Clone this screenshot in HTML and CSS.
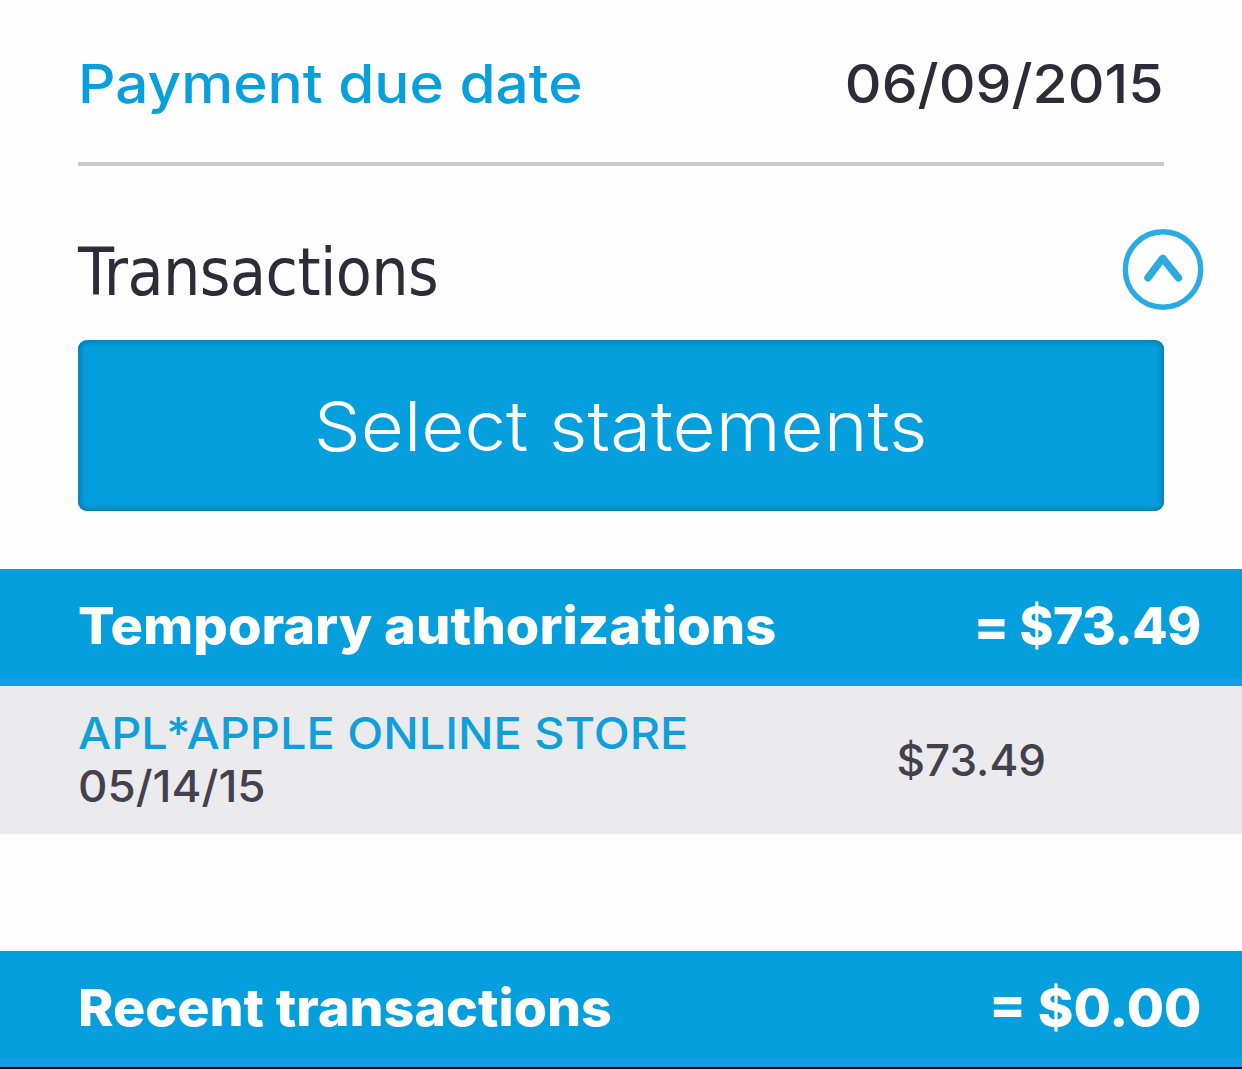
FILE: index.html
```html
<!DOCTYPE html>
<html lang="en">
<head>
<meta charset="utf-8">
<title>Transactions</title>
<link rel="stylesheet" href="styles.css">
</head>
<body>
<main class="page">
  <section class="due">
    <span class="due-label">Payment due date</span>
    <span class="due-date">06/09/2015</span>
  </section>
  <header class="heading">
    <h1 class="title">Transactions</h1>
    <svg class="toggle" viewBox="0 0 82 82" fill="none" stroke="#2cabe2">
      <circle cx="41" cy="40.500" r="37.7" stroke-width="5.4"/>
      <path d="M26 48.800 L40.700 29.300 L56.500 48.800" stroke-width="7.400" stroke-linecap="round" stroke-linejoin="round"/>
    </svg>
  </header>
  <button class="select"><span class="select-text">Select statements</span></button>
  <section class="band">
    <h2 class="band-title temporary-title">Temporary authorizations</h2>
    <span class="band-total temporary-total">= $73.49</span>
  </section>
  <section class="entry">
    <div class="entry-info">
      <span class="merchant">APL*APPLE ONLINE STORE</span>
      <span class="date">05/14/15</span>
    </div>
    <span class="amount">$73.49</span>
  </section>
  <section class="band recent">
    <h2 class="band-title recent-title">Recent transactions</h2>
    <span class="band-total recent-total">= $0.00</span>
  </section>
</main>
</body>
</html>
```
FILE: styles.css
```css
* { box-sizing: border-box; }
body {
  margin: 0;
  background: #fefefe;
  font-family: Inter, "Open Sans", sans-serif;
  font-weight: 500;
  color: #2d2c38;
  white-space: nowrap;
}
h1, h2 { margin: 0; }
.page {
  display: flex;
  flex-direction: column;
  height: 1069px;
  overflow: hidden;
  border-bottom: 2px solid #000;
}
.due {
  display: flex;
  justify-content: space-between;
  height: 166px;
  margin: 0 78px;
  padding-top: 5px;
  border-bottom: 4px solid #cbcbcb;
  font-size: 54px;
  line-height: 158px;
}
/* The wide lettering stretches each label from its aligned edge. */
.due-label { color: #089fdd; transform: scaleX(1.083); transform-origin: left; }
.due-date { transform: scaleX(1.057); transform-origin: right; }
.heading {
  display: flex;
  justify-content: space-between;
  align-items: center;
  height: 174px;
  padding: 33px 38px 0 78px;
}
.title {
  padding-top: 5px;
  font: 400 65.5px/80px "DejaVu Sans Condensed", "DejaVu Sans", sans-serif;
  font-stretch: condensed;
  letter-spacing: -0.55px;
}
.toggle { width: 82px; height: 82px; }
.select {
  height: 171px;
  margin: 0 78px;
  padding: 2px 0 0;
  border: 0;
  border-radius: 9px;
  background: #069fdd;
  box-shadow: inset 0 0 7px 1px #05648ccc;
  color: #fff;
  font: 300 69px/169px Inter, sans-serif;
}
.select-text { display: inline-block; transform: scaleX(1.078); }
.band {
  display: flex;
  justify-content: space-between;
  flex: none;
  height: 117px;
  margin-top: 58px;
  padding: 0 41px 0 78px;
  background: #069fdd;
  border-bottom: 8px solid #149ee5;
  color: #fff;
  font-size: 51.5px;
  font-weight: 800;
  line-height: 113px;
}
.band-title { font: inherit; transform-origin: left; }
.temporary-title { transform: scaleX(1.053); }
.temporary-total { letter-spacing: -0.4px; }
.recent-title { transform: scaleX(1.043); }
.recent-total { transform: scaleX(1.05); transform-origin: right; }
.entry {
  display: flex;
  justify-content: space-between;
  align-items: center;
  height: 148px;
  padding: 0 196px 0 78px;
  background: #ebebed;
  color: #43414e;
  font-size: 44px;
  line-height: 53px;
}
.entry-info { display: flex; flex-direction: column; align-items: flex-start; }
.merchant { color: #119fda; transform: scaleX(1.066); transform-origin: left; }
.date { transform: scaleX(1.038); transform-origin: left; }
.recent { margin-top: 117px; height: 116px; }
```
